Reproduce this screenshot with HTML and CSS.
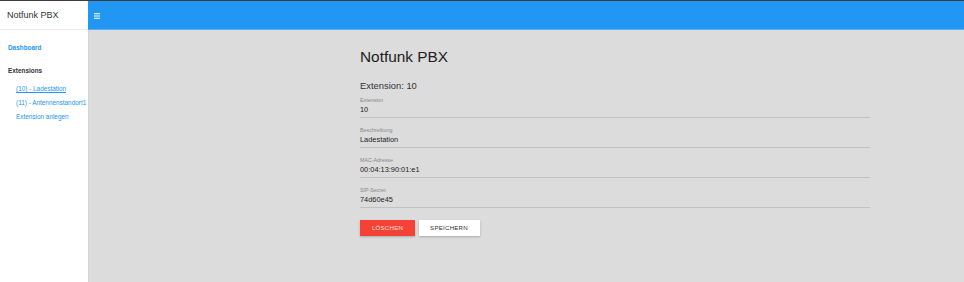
FILE: index.html
```html
<!DOCTYPE html>
<html lang="de">
  <head>
    <meta charset="UTF-8" />
    <meta name="viewport" content="width=device-width, initial-scale=1.0" />
    <title>Notfunk PBX</title>
    <link rel="stylesheet" href="styles.css">
  </head>
  <body>
    <header class="topbar">
      <div class="brand">Notfunk PBX</div>
      <div class="appbar">
        <svg class="menu-toggle" width="6" height="6" viewBox="0 0 6 6">
          <rect x="0" y="0" width="6" height="1.3" fill="#d6ebfd" />
          <rect x="0" y="2.35" width="6" height="1.3" fill="#d6ebfd" />
          <rect x="0" y="4.7" width="6" height="1.3" fill="#d6ebfd" />
        </svg>
      </div>
    </header>

    <div class="layout">
      <nav class="sidebar">
        <a class="nav-main" href="#">Dashboard</a>
        <div class="nav-heading">Extensions</div>
        <ul class="nav-list">
          <li><a class="active" href="#">(10) - Ladestation</a></li>
          <li><a href="#">(11) - Antennenstandort1</a></li>
          <li><a href="#">Extension anlegen</a></li>
        </ul>
      </nav>

      <main class="content">
        <div class="panel">
          <h1 class="page-title">Notfunk PBX</h1>
          <h2 class="section-title">Extension: 10</h2>

          <div class="field">
            <label>Extension</label>
            <div class="value">10</div>
          </div>
          <div class="field">
            <label>Beschreibung</label>
            <div class="value">Ladestation</div>
          </div>
          <div class="field">
            <label>MAC-Adresse</label>
            <div class="value">00:04:13:90:01:e1</div>
          </div>
          <div class="field">
            <label>SIP-Secret</label>
            <div class="value">74d60e45</div>
          </div>

          <div class="actions">
            <button class="btn btn-danger">Löschen</button>
            <button class="btn btn-light">Speichern</button>
          </div>
        </div>
      </main>
    </div>
  </body>
</html>
```

FILE: styles.css
```css
* {
  margin: 0;
  padding: 0;
  box-sizing: border-box;
}

html,
body {
  height: 100%;
}

body {
  font-family: 'Liberation Sans', Arial, sans-serif;
  background: #dcdcdc;
  color: #222;
  display: flex;
  flex-direction: column;
  border-top: 1px solid #3c3c3c;
}

.topbar {
  display: flex;
  height: 29px;
  flex-shrink: 0;
}

.brand {
  width: 88px;
  background: #fff;
  font-size: 9px;
  color: #333;
  padding-left: 7px;
  display: flex;
  align-items: center;
  border-bottom: 1px solid #ececec;
}

.appbar {
  flex: 1;
  background: #2196f3;
  display: flex;
  align-items: center;
  padding-left: 6px;
  border-bottom: 1px solid #5aaef5;
}

.menu-toggle {
  display: block;
  margin-top: 1px;
}

.layout {
  flex: 1;
  display: flex;
}

.sidebar {
  width: 88px;
  background: #fff;
  padding: 14px 0 0 8px;
  box-shadow: 1px 0 1px rgba(0, 0, 0, 0.04);
}

.sidebar a {
  color: #2196f3;
  text-decoration: none;
}

.nav-main {
  display: block;
  font-size: 6.4px;
  line-height: 8px;
  font-weight: bold;
  margin-bottom: 14.5px;
}

.nav-heading {
  font-size: 6.4px;
  line-height: 8px;
  font-weight: bold;
  color: #333;
  margin-bottom: 7.5px;
}

.nav-list {
  list-style: none;
  padding-left: 8px;
}

.nav-list li {
  font-size: 6.4px;
  line-height: 14px;
  white-space: nowrap;
}

.nav-list a.active {
  text-decoration: underline;
}

.content {
  flex: 1;
  padding-left: 272px;
}

.panel {
  width: 510px;
  padding-top: 18px;
}

.page-title {
  font-size: 15.4px;
  line-height: 18px;
  font-weight: normal;
  color: #222;
  margin-bottom: 14px;
}

.section-title {
  font-size: 9.4px;
  line-height: 11px;
  font-weight: normal;
  color: #333;
  margin-bottom: 4.7px;
}

.field {
  margin-bottom: 8px;
  border-bottom: 1px solid #c2c2c2;
  padding-bottom: 2px;
}

.field label {
  display: block;
  font-size: 5.3px;
  color: #888;
  line-height: 8px;
}

.value {
  font-size: 7.4px;
  color: #222;
  line-height: 11px;
}

.actions {
  display: flex;
  gap: 3.5px;
  margin-top: 12px;
}

.btn {
  height: 16px;
  border: none;
  font-family: inherit;
  font-size: 6.1px;
  letter-spacing: 0.25px;
  text-transform: uppercase;
  box-shadow: 0 1px 2px rgba(0, 0, 0, 0.22);
  cursor: pointer;
}

.btn-danger {
  background: #f44336;
  color: #fde0de;
  width: 55px;
}

.btn-light {
  background: #fff;
  color: #333;
  width: 61px;
}
```
